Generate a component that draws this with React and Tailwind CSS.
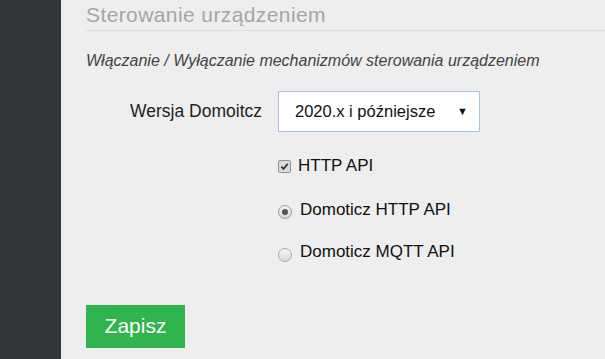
import React from "react";

export default function App() {
  return (
    <div className="flex h-[359px] w-[605px] overflow-hidden bg-[#eeeeee] font-['Liberation_Sans',Arial,sans-serif]">
      <aside className="w-[61px] shrink-0 bg-[#33363a]" />
      <main className="flex-1 pl-[25px]">
        <h2 className="mt-[2px] border-b border-[#dddddd] pb-[2px] text-[21px] leading-[26px] tracking-[0.4px] text-[#a6a6a6]">
          Sterowanie urządzeniem
        </h2>
        <p className="mt-[21px] text-[16px] italic leading-[18px] text-[#444444]">
          Włączanie / Wyłączanie mechanizmów sterowania urządzeniem
        </p>
        <div className="mt-[21px] flex items-center">
          <label className="w-[192px] pr-[16px] text-right text-[17.5px] text-[#222222]">Wersja Domoitcz</label>
          <div className="flex h-[41px] w-[202px] items-center justify-between border border-[#a9c3e6] bg-white pl-[16px] pr-[11px] text-[16.5px] text-[#111111]">
            <span>2020.x i późniejsze</span>
            <span className="text-[11px]">▼</span>
          </div>
        </div>
        <div className="ml-[192px] mt-[21px] flex flex-col gap-[17px] text-[17px] leading-[25.5px] text-[#111111]">
          <label className="flex items-center gap-[7px]">
            <span className="mt-[2px] flex h-[13px] w-[13px] items-center justify-center rounded-[2px] border border-[#8f8f8f] bg-[#dcdcdc]">
              <svg width="9" height="9" viewBox="0 0 10 10">
                <path d="M1.5 5.2 L4 7.6 L8.6 2" stroke="#333" strokeWidth="2" fill="none" />
              </svg>
            </span>
            <span>HTTP API</span>
          </label>
          <label className="mt-[1px] flex items-center gap-[8px]">
            <span className="mt-[6px] flex h-[14px] w-[14px] items-center justify-center rounded-full border border-[#9a9a9a] bg-gradient-to-b from-[#f4f4f4] to-[#d6d6d6]">
              <span className="h-[6px] w-[6px] rounded-full bg-[#555555]" />
            </span>
            <span>Domoticz HTTP API</span>
          </label>
          <label className="flex items-center gap-[8px]">
            <span className="mt-[6px] h-[14px] w-[14px] rounded-full border border-[#a8a8a8] bg-gradient-to-b from-[#f6f6f6] to-[#d9d9d9]" />
            <span>Domoticz MQTT API</span>
          </label>
        </div>
        <button className="mt-[40px] h-[43px] w-[99px] bg-[#2fb44e] text-[21px] text-white">Zapisz</button>
      </main>
    </div>
  );
}
